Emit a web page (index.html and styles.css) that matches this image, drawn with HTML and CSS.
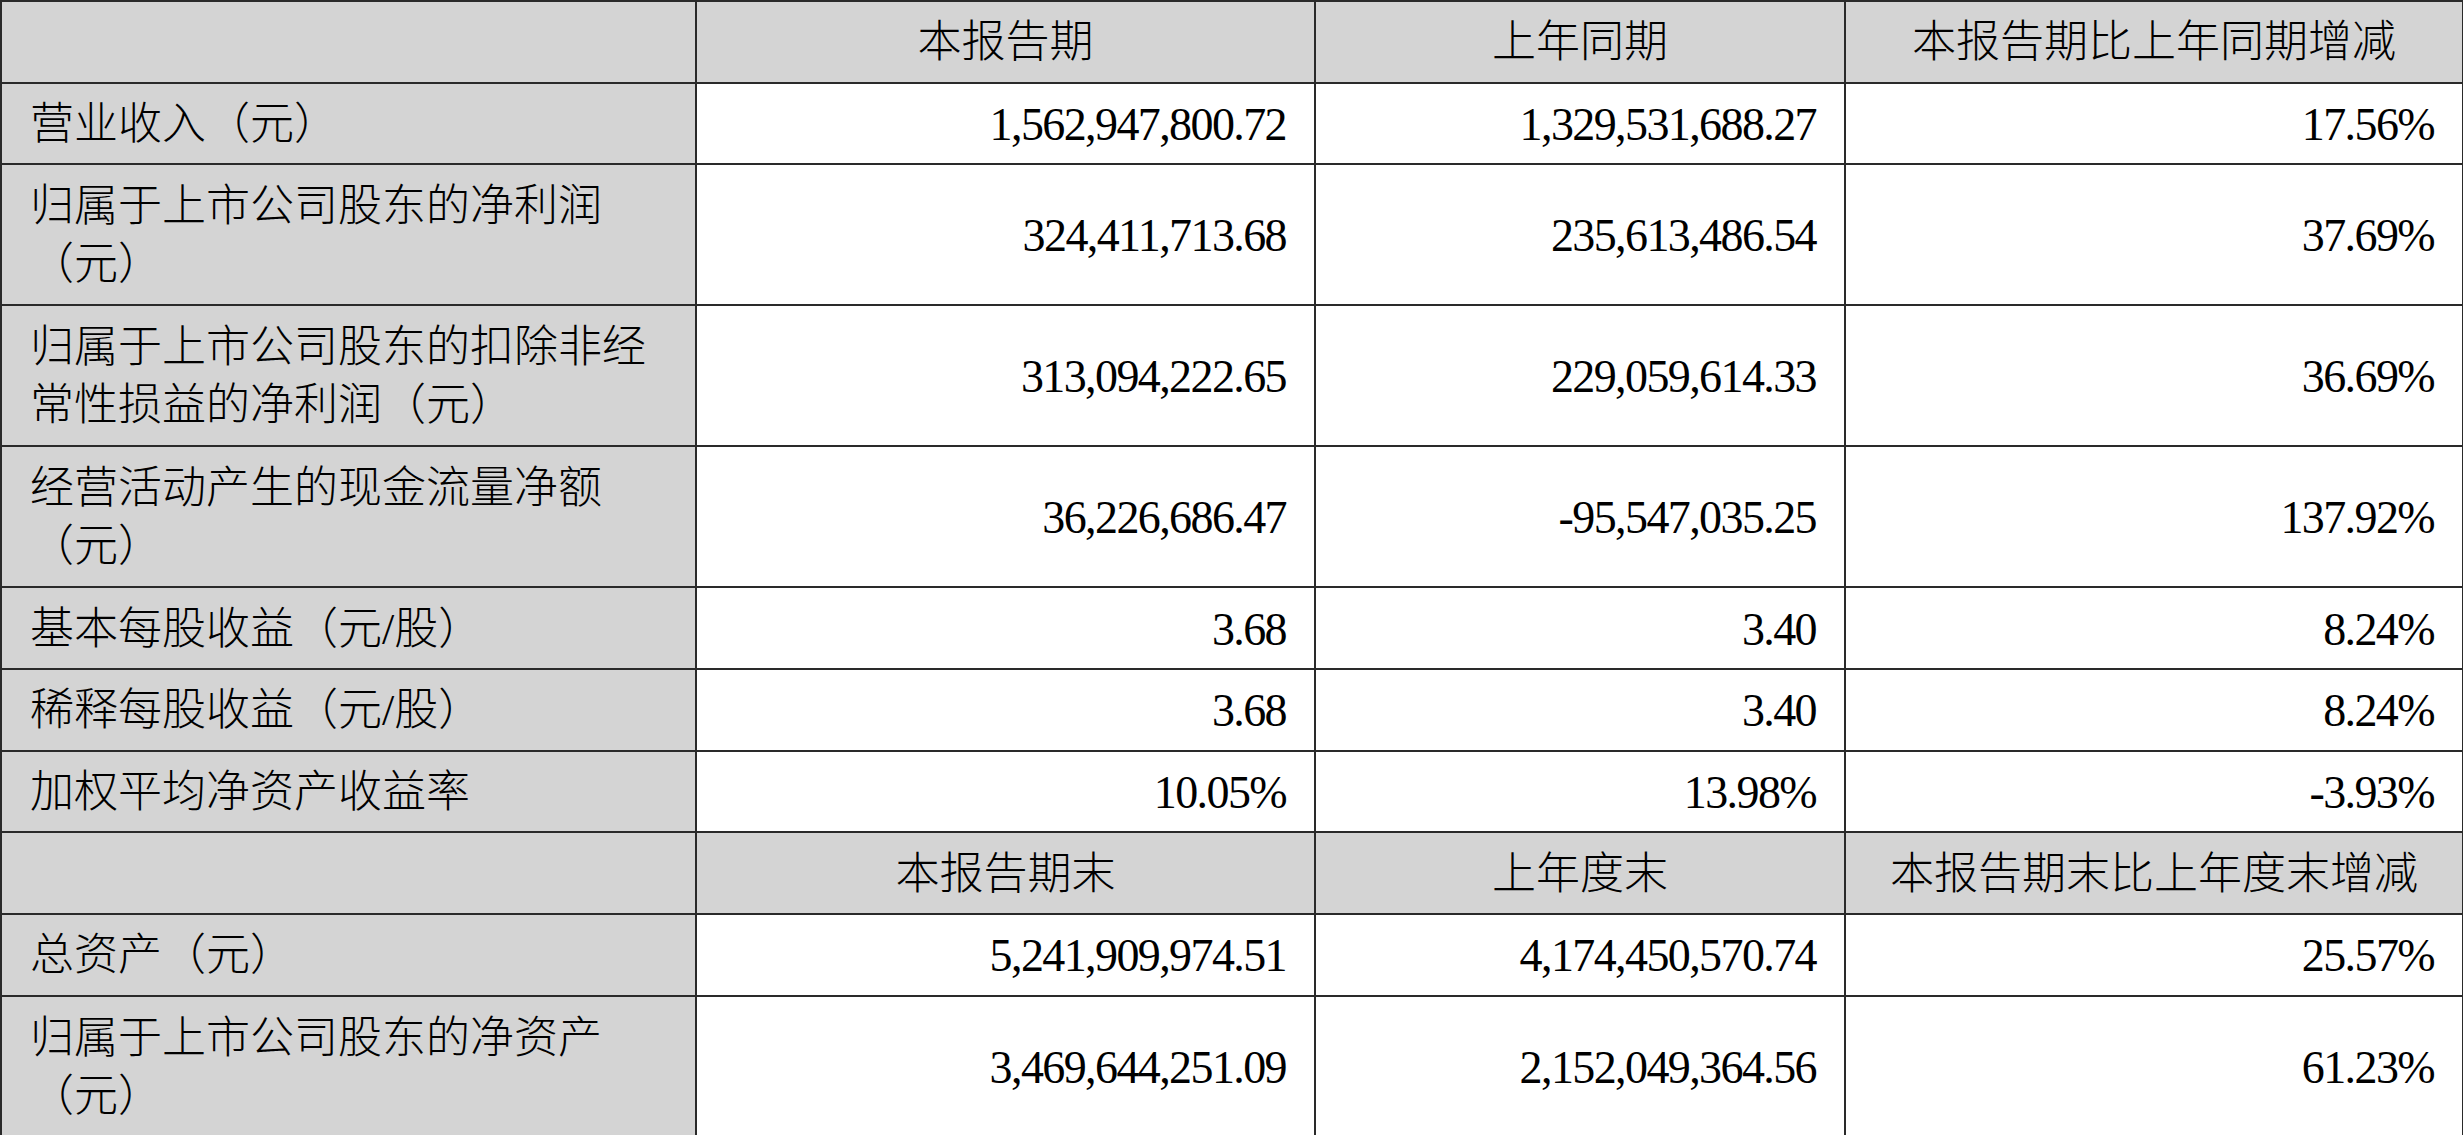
FILE: index.html
```html
<!DOCTYPE html>
<html lang="zh-CN">
<head>
<meta charset="utf-8">
<title>主要会计数据和财务指标</title>
<link rel="stylesheet" href="styles.css">
</head>
<body>
<table class="fin">
  <colgroup>
    <col class="c-label">
    <col class="c-cur">
    <col class="c-prev">
    <col class="c-chg">
  </colgroup>
  <tbody>
    <tr class="head single">
      <td class="label"></td>
      <td class="hd">本报告期</td>
      <td class="hd">上年同期</td>
      <td class="hd">本报告期比上年同期增减</td>
    </tr>
    <tr class="single">
      <td class="label">营业收入（元）</td>
      <td class="num">1,562,947,800.72</td>
      <td class="num">1,329,531,688.27</td>
      <td class="num">17.56%</td>
    </tr>
    <tr class="double">
      <td class="label">归属于上市公司股东的净利润（元）</td>
      <td class="num">324,411,713.68</td>
      <td class="num">235,613,486.54</td>
      <td class="num">37.69%</td>
    </tr>
    <tr class="double">
      <td class="label">归属于上市公司股东的扣除非经常性损益的净利润（元）</td>
      <td class="num">313,094,222.65</td>
      <td class="num">229,059,614.33</td>
      <td class="num">36.69%</td>
    </tr>
    <tr class="double">
      <td class="label">经营活动产生的现金流量净额（元）</td>
      <td class="num">36,226,686.47</td>
      <td class="num">-95,547,035.25</td>
      <td class="num">137.92%</td>
    </tr>
    <tr class="single">
      <td class="label">基本每股收益（元/股）</td>
      <td class="num">3.68</td>
      <td class="num">3.40</td>
      <td class="num">8.24%</td>
    </tr>
    <tr class="single">
      <td class="label">稀释每股收益（元/股）</td>
      <td class="num">3.68</td>
      <td class="num">3.40</td>
      <td class="num">8.24%</td>
    </tr>
    <tr class="single">
      <td class="label">加权平均净资产收益率</td>
      <td class="num">10.05%</td>
      <td class="num">13.98%</td>
      <td class="num">-3.93%</td>
    </tr>
    <tr class="head single">
      <td class="label"></td>
      <td class="hd">本报告期末</td>
      <td class="hd">上年度末</td>
      <td class="hd">本报告期末比上年度末增减</td>
    </tr>
    <tr class="single">
      <td class="label">总资产（元）</td>
      <td class="num">5,241,909,974.51</td>
      <td class="num">4,174,450,570.74</td>
      <td class="num">25.57%</td>
    </tr>
    <tr class="double">
      <td class="label">归属于上市公司股东的净资产（元）</td>
      <td class="num">3,469,644,251.09</td>
      <td class="num">2,152,049,364.56</td>
      <td class="num">61.23%</td>
    </tr>
  </tbody>
</table>
</body>
</html>
```

FILE: styles.css
```css
html, body {
  margin: 0;
  padding: 0;
  background: #ffffff;
}

.fin {
  border-collapse: collapse;
  table-layout: fixed;
  width: 2462px;
  font-family: "Liberation Serif", "Noto Sans CJK SC", serif;
  font-size: 44px;
  line-height: 58px;
  color: #000000;
}

.c-label { width: 695px; }
.c-cur { width: 619px; }
.c-prev { width: 530px; }
.c-chg { width: 618px; }

.fin td {
  border: 2px solid #2a2a2a;
  padding: 3px 28px 0;
  vertical-align: middle;
  overflow: hidden;
}

.single { height: 81.7px; }
.double { height: 141px; }

.label {
  background: #d4d4d4;
  text-align: left;
  padding-right: 24px;
  font-weight: 300;
}

.head td {
  background: #d4d4d4;
}

.hd {
  text-align: center;
  font-weight: 300;
  white-space: nowrap;
}

.fin td.hd {
  padding-left: 4px;
  padding-right: 4px;
}

.num {
  text-align: right;
  font-size: 46px;
  letter-spacing: -1.6px;
  white-space: nowrap;
}
```
